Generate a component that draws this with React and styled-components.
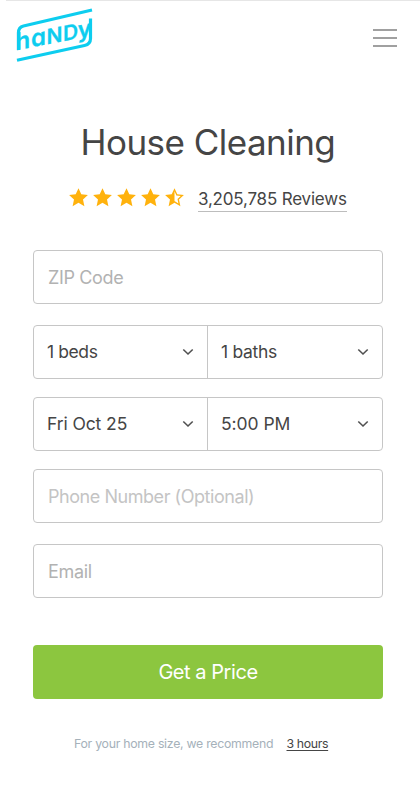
import React from "react";
import styled, { createGlobalStyle } from "styled-components";

const GlobalStyle = createGlobalStyle`
  *, *::before, *::after { box-sizing: border-box; }
  body {
    margin: 0;
    background: #fff;
    color: #454545;
    font-family: Inter, "Liberation Sans", sans-serif;
  }
  input, button, select { font: inherit; color: inherit; margin: 0; }
`;

const Page = styled.div`
  height: 789px;
  overflow: hidden;
  display: flex;
  flex-direction: column;
`;

const Header = styled.header`
  height: 70px;
  margin-left: 6px;
  border-top: 1px solid #e6e6e6;
  display: flex;
  justify-content: space-between;
  padding: 6px 22px 0 9px;
`;

const Logo = styled.svg`
  width: 80px;
  height: 56px;
  fill: none;
  stroke: #0dcdef;
  stroke-width: 3.2;
`;

const Wordmark = styled.text`
  fill: #0dcdef;
  stroke: #0dcdef;
  stroke-width: 0.3;
  font-family: Inter, sans-serif;
  font-weight: 600;
  font-feature-settings: "cv11";
`;

const MenuButton = styled.button`
  width: 24px;
  height: 20px;
  margin-top: 22px;
  margin-right: 1px;
  padding: 0;
  border: 0;
  background: none;
  display: flex;
  flex-direction: column;
  gap: 6px;
`;

const MenuBar = styled.span`
  height: 2px;
  background: #a0a0a0;
`;

const Title = styled.h1`
  height: 44px;
  margin: 50px 0 0 80.5px;
  font-size: 35px;
  line-height: 44px;
  font-weight: 400;
  letter-spacing: -0.53px;
  white-space: nowrap;
`;

const Rating = styled.div`
  display: flex;
  height: 24px;
  margin: 24px 0 38px 69px;
`;

const Stars = styled.div`
  display: flex;
  gap: 4.9px;
  width: 129px;
`;

const StarIcon = styled.svg`
  width: 19px;
  height: 19px;
  flex: none;
  fill: #ffb20d;
`;

const Reviews = styled.a`
  height: 24px;
  width: 149px;
  line-height: 23px;
  font-size: 17px;
  letter-spacing: -0.2px;
  white-space: nowrap;
  border-bottom: 1px solid #bdbdbd;
`;

const Form = styled.form`
  width: 350px;
  margin-left: 33px;
  display: flex;
  flex-direction: column;
`;

const Field = styled.input`
  height: 54px;
  width: 100%;
  padding: 0 14px;
  margin-bottom: ${(p) => p.$gap}px;
  border: 1.4px solid #c6c6c6;
  border-radius: 4px;
  outline: 0;
  background: #fff;
  font-size: 18px;
  letter-spacing: ${(p) => p.$tracking}px;
  &::placeholder { color: ${(p) => p.$tone}; opacity: 1; }
`;

const Pair = styled.div`
  height: 54px;
  margin-bottom: 18px;
  border: 1.4px solid #c6c6c6;
  border-radius: 4px;
  display: grid;
  grid-template-columns: 173px 1fr;
`;

const Choice = styled.div`
  display: flex;
  align-items: center;
  justify-content: space-between;
  padding: 0 13px 1px 13px;
  font-size: 17.5px;
  letter-spacing: ${(p) => p.$tracking}px;
  white-space: nowrap;
  & + & { border-left: 1px solid #c6c6c6; }
`;

const ChevronIcon = styled.svg`
  width: 12px;
  height: 8px;
  fill: none;
  stroke: #505050;
  stroke-width: 1.6;
`;

const Submit = styled.button`
  height: 54px;
  margin-top: 1px;
  padding: 0;
  border: 0;
  border-radius: 4px;
  background: #8cc63f;
  color: #fff;
  font-size: 20px;
  letter-spacing: -0.45px;
`;

const Hint = styled.p`
  display: flex;
  margin: 36px 0 0 74px;
  height: 18px;
  font-size: 12.3px;
  line-height: 17px;
  color: #a5b1ba;
  white-space: nowrap;
`;

const HintText = styled.span`
  width: 212.5px;
  letter-spacing: -0.27px;
`;

const HintLink = styled.a`
  color: #454545;
  line-height: 18px;
  letter-spacing: -0.35px;
  text-decoration: underline;
  text-underline-offset: 2px;
`;

const STAR = "M9.5.2l2.8 6.1 6.6.7-4.9 4.5 1.4 6.7-5.9-3.4-5.9 3.4L5 11.5.1 7l6.6-.7z";

function Star({ half }) {
  return (
    <StarIcon viewBox="0 0 19 19">
      <path
        fillRule="evenodd"
        d={half ? STAR + "M9.5 3.3v9.8l3.9 2.3-.9-4.4 3.2-3-4.3-.5z" : STAR}
      />
    </StarIcon>
  );
}

function Select({ label, tracking }) {
  return (
    <Choice $tracking={tracking}>
      {label}
      <ChevronIcon viewBox="0 0 12 8"><path d="M1.3 1.5 6 6l4.7-4.5" /></ChevronIcon>
    </Choice>
  );
}

export default function App() {
  return (
    <>
      <GlobalStyle />
      <Page>
        <Header>
          <Logo viewBox="15 7 80 56" aria-label="handy">
            <path d="M18.5 50V32.5Q18.5 27.3 23.5 26L92 10" />
            <path d="M17 60.2 84.5 45.5Q90.5 44.2 90.5 38.5V18.5" />
            <Wordmark transform="translate(15.4 50.4) skewY(-11)">
              <tspan x="0" fontSize="24">h</tspan>
              <tspan x="15.6" fontSize="24">a</tspan>
              <tspan x="31" fontSize="21">N</tspan>
              <tspan x="47.6" fontSize="21">D</tspan>
              <tspan x="62.4" fontSize="23">y</tspan>
            </Wordmark>
          </Logo>
          <MenuButton aria-label="Menu">
            <MenuBar /><MenuBar /><MenuBar />
          </MenuButton>
        </Header>
        <Title>House Cleaning</Title>
        <Rating>
          <Stars>
            <Star /><Star /><Star /><Star /><Star half />
          </Stars>
          <Reviews>3,205,785 Reviews</Reviews>
        </Rating>
        <Form>
          <Field placeholder="ZIP Code" $gap={21} $tone="#b2b2b2" $tracking={-0.35} />
          <Pair>
            <Select label="1 beds" tracking={-0.4} />
            <Select label="1 baths" tracking={-0.3} />
          </Pair>
          <Pair>
            <Select label="Fri Oct 25" tracking={-0.1} />
            <Select label="5:00 PM" tracking={-0.05} />
          </Pair>
          <Field placeholder="Phone Number (Optional)" $gap={21} $tone="#c4c4c4" $tracking={-0.45} />
          <Field placeholder="Email" $gap={46} $tone="#b2b2b2" $tracking={-0.3} />
          <Submit type="button">Get a Price</Submit>
        </Form>
        <Hint>
          <HintText>For your home size, we recommend</HintText>
          <HintLink>3 hours</HintLink>
        </Hint>
      </Page>
    </>
  );
}
